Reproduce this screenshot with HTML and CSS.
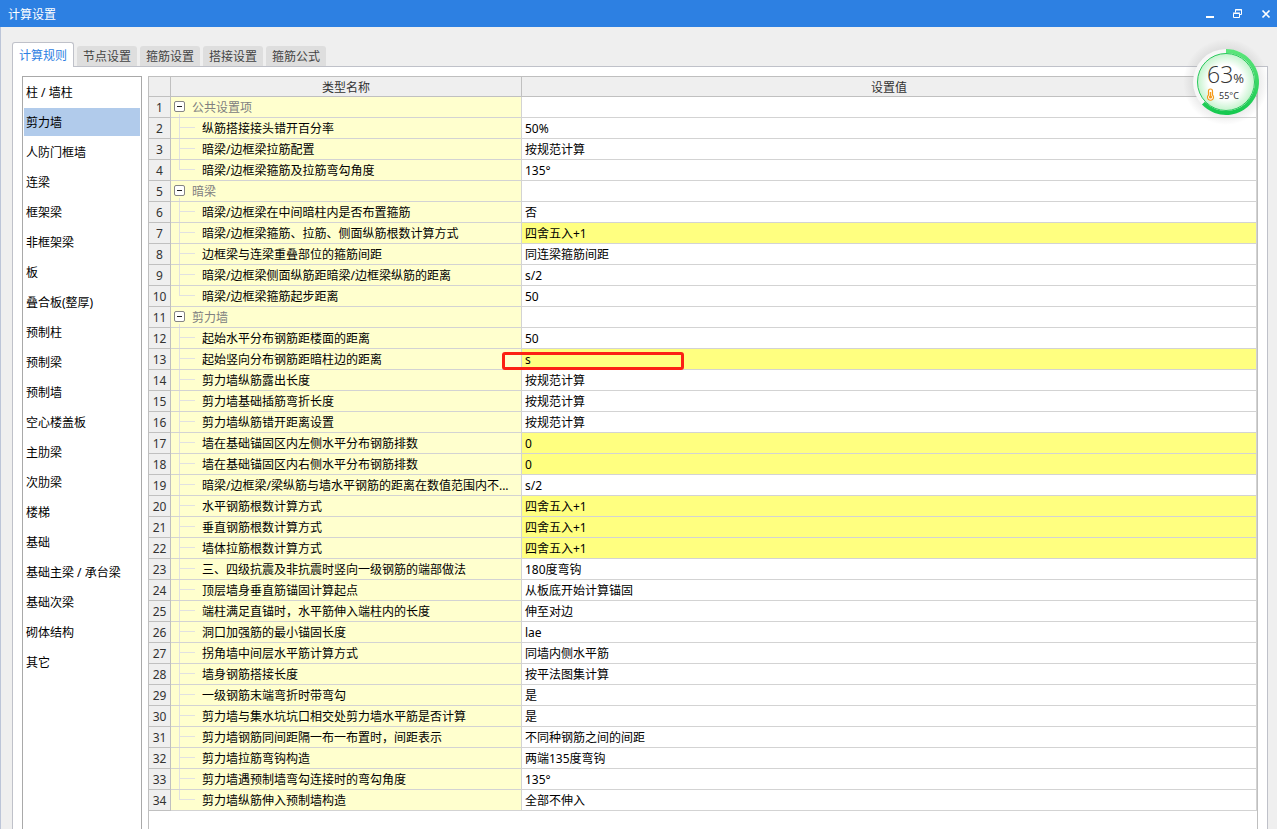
FILE: index.html
```html
<!DOCTYPE html>
<html lang="zh-CN">
<head>
<meta charset="utf-8">
<title>计算设置</title>
<link rel="stylesheet" href="styles.css">
</head>
<body>
<div class="window">
  <header class="titlebar">
    <h1 class="title">计算设置</h1>
    <div class="controls">
      <button class="control" type="button" aria-label="最小化"><svg width="10" height="10" viewBox="0 0 10 10"><path d="M1 7h8v2H1z" fill="#fff"/></svg></button>
      <button class="control" type="button" aria-label="还原"><svg width="10" height="10" viewBox="0 0 10 10" fill="none" stroke="#fff"><path d="M2.500 3.500v-3h6v5h-2M2 1h7M.500 4.500h6v4h-6zM0 4h7"/></svg></button>
      <button class="control" type="button" aria-label="关闭"><svg width="10" height="10" viewBox="0 0 10 10"><path d="M1.500 1.500l7 7M8.500 1.500l-7 7" stroke="#fff" stroke-width="1.700"/></svg></button>
    </div>
  </header>
  <div class="content">
    <nav class="tabs" role="tablist">
      <button class="tab active" type="button" role="tab" aria-selected="true">计算规则</button>
      <button class="tab" type="button" role="tab">节点设置</button>
      <button class="tab" type="button" role="tab">箍筋设置</button>
      <button class="tab" type="button" role="tab">搭接设置</button>
      <button class="tab" type="button" role="tab">箍筋公式</button>
    </nav>
    <main class="panel">
      <aside class="sidebar">
        <button class="item" type="button">柱 / 墙柱</button>
        <button class="item selected" type="button">剪力墙</button>
        <button class="item" type="button">人防门框墙</button>
        <button class="item" type="button">连梁</button>
        <button class="item" type="button">框架梁</button>
        <button class="item" type="button">非框架梁</button>
        <button class="item" type="button">板</button>
        <button class="item" type="button">叠合板(整厚)</button>
        <button class="item" type="button">预制柱</button>
        <button class="item" type="button">预制梁</button>
        <button class="item" type="button">预制墙</button>
        <button class="item" type="button">空心楼盖板</button>
        <button class="item" type="button">主肋梁</button>
        <button class="item" type="button">次肋梁</button>
        <button class="item" type="button">楼梯</button>
        <button class="item" type="button">基础</button>
        <button class="item" type="button">基础主梁 / 承台梁</button>
        <button class="item" type="button">基础次梁</button>
        <button class="item" type="button">砌体结构</button>
        <button class="item" type="button">其它</button>
      </aside>
      <section class="grid-box">
        <table class="grid">
          <colgroup><col class="col-no"><col class="col-name"><col></colgroup>
          <thead><tr><th></th><th>类型名称</th><th>设置值</th></tr></thead>
          <tbody>
            <tr class="group"><th>1</th><td><button class="toggle" type="button" aria-label="折叠"></button>公共设置项</td><td></td></tr>
            <tr><th>2</th><td>纵筋搭接接头错开百分率</td><td>50%</td></tr>
            <tr><th>3</th><td>暗梁/边框梁拉筋配置</td><td>按规范计算</td></tr>
            <tr class="last"><th>4</th><td>暗梁/边框梁箍筋及拉筋弯勾角度</td><td>135°</td></tr>
            <tr class="group"><th>5</th><td><button class="toggle" type="button" aria-label="折叠"></button>暗梁</td><td></td></tr>
            <tr><th>6</th><td>暗梁/边框梁在中间暗柱内是否布置箍筋</td><td>否</td></tr>
            <tr class="changed"><th>7</th><td>暗梁/边框梁箍筋、拉筋、侧面纵筋根数计算方式</td><td>四舍五入+1</td></tr>
            <tr><th>8</th><td>边框梁与连梁重叠部位的箍筋间距</td><td>同连梁箍筋间距</td></tr>
            <tr><th>9</th><td>暗梁/边框梁侧面纵筋距暗梁/边框梁纵筋的距离</td><td>s/2</td></tr>
            <tr class="last"><th>10</th><td>暗梁/边框梁箍筋起步距离</td><td>50</td></tr>
            <tr class="group"><th>11</th><td><button class="toggle" type="button" aria-label="折叠"></button>剪力墙</td><td></td></tr>
            <tr><th>12</th><td>起始水平分布钢筋距楼面的距离</td><td>50</td></tr>
            <tr class="changed"><th>13</th><td>起始竖向分布钢筋距暗柱边的距离</td><td class="marked">s<span class="marker"></span></td></tr>
            <tr><th>14</th><td>剪力墙纵筋露出长度</td><td>按规范计算</td></tr>
            <tr><th>15</th><td>剪力墙基础插筋弯折长度</td><td>按规范计算</td></tr>
            <tr><th>16</th><td>剪力墙纵筋错开距离设置</td><td>按规范计算</td></tr>
            <tr class="changed"><th>17</th><td>墙在基础锚固区内左侧水平分布钢筋排数</td><td>0</td></tr>
            <tr class="changed"><th>18</th><td>墙在基础锚固区内右侧水平分布钢筋排数</td><td>0</td></tr>
            <tr><th>19</th><td>暗梁/边框梁/梁纵筋与墙水平钢筋的距离在数值范围内不...</td><td>s/2</td></tr>
            <tr class="changed"><th>20</th><td>水平钢筋根数计算方式</td><td>四舍五入+1</td></tr>
            <tr class="changed"><th>21</th><td>垂直钢筋根数计算方式</td><td>四舍五入+1</td></tr>
            <tr class="changed"><th>22</th><td>墙体拉筋根数计算方式</td><td>四舍五入+1</td></tr>
            <tr><th>23</th><td>三、四级抗震及非抗震时竖向一级钢筋的端部做法</td><td>180度弯钩</td></tr>
            <tr><th>24</th><td>顶层墙身垂直筋锚固计算起点</td><td>从板底开始计算锚固</td></tr>
            <tr><th>25</th><td>端柱满足直锚时，水平筋伸入端柱内的长度</td><td>伸至对边</td></tr>
            <tr><th>26</th><td>洞口加强筋的最小锚固长度</td><td>lae</td></tr>
            <tr><th>27</th><td>拐角墙中间层水平筋计算方式</td><td>同墙内侧水平筋</td></tr>
            <tr><th>28</th><td>墙身钢筋搭接长度</td><td>按平法图集计算</td></tr>
            <tr><th>29</th><td>一级钢筋末端弯折时带弯勾</td><td>是</td></tr>
            <tr><th>30</th><td>剪力墙与集水坑坑口相交处剪力墙水平筋是否计算</td><td>是</td></tr>
            <tr><th>31</th><td>剪力墙钢筋同间距隔一布一布置时，间距表示</td><td>不同种钢筋之间的间距</td></tr>
            <tr><th>32</th><td>剪力墙拉筋弯钩构造</td><td>两端135度弯钩</td></tr>
            <tr><th>33</th><td>剪力墙遇预制墙弯勾连接时的弯勾角度</td><td>135°</td></tr>
            <tr class="last"><th>34</th><td>剪力墙纵筋伸入预制墙构造</td><td>全部不伸入</td></tr>
          </tbody>
        </table>
      </section>
    </main>
  </div>
  <div class="gauge">
    <svg class="gauge-ring" viewBox="0 0 90 90" width="90" height="90" aria-hidden="true">
      <defs>
        <radialGradient id="halo"><stop offset=".7" stop-color="#888" stop-opacity=".2"/><stop offset="1" stop-color="#888" stop-opacity="0"/></radialGradient>
        <radialGradient id="face"><stop offset=".6" stop-color="#fff"/><stop offset="1" stop-color="#c4f3cd"/></radialGradient>
        <linearGradient id="arc" x1="0" y1="0" x2="0" y2="1"><stop offset="0" stop-color="#5be57a"/><stop offset="1" stop-color="#16c950"/></linearGradient>
      </defs>
      <circle cx="45" cy="45" r="43" fill="url(#halo)"/>
      <circle cx="45" cy="45" r="33" fill="#f7f7f7"/>
      <path d="M45 14A31 31 0 1 1 22.400 66.200" fill="none" stroke="url(#arc)" stroke-width="4"/>
      <circle cx="45" cy="45" r="28.500" fill="url(#face)" stroke="#28c95b"/>
      <path d="M27.500 58v-4a2 2 0 0 1 4 0v4a3 3 0 1 1-4 0z" fill="#fff" stroke="#f59a1b" stroke-width="1.200"/>
      <path d="M29.500 55v5" stroke="#f59a1b" stroke-width="1.500"/>
      <circle cx="29.500" cy="60" r="1.600" fill="#f59a1b"/>
    </svg>
    <div class="gauge-text">
      <div class="load">63<span class="unit">%</span></div>
      <div class="temp">55°C</div>
    </div>
  </div>
</div>
</body>
</html>
```
FILE: styles.css
```css
* { box-sizing: border-box; }
body, button, table {
  font-family: "Noto Sans", "Noto Sans CJK SC", sans-serif;
  font-size: 12px;
}
body { margin: 0; color: #000; }
button { margin: 0; padding: 0; border: 0; background: none; color: inherit; }

.window {
  position: relative;
  display: flex;
  flex-direction: column;
  height: 100vh;
  overflow: hidden;
  background: #efefef;
}
.titlebar {
  display: flex;
  flex: none;
  justify-content: space-between;
  align-items: center;
  height: 27px;
  padding: 0 6px 0 8px;
  background: #2d80e2;
  color: #fff;
}
.title { margin: 0; font-size: 12px; font-weight: 400; }
.controls { display: flex; gap: 18px; }
.control { display: flex; width: 10px; height: 10px; }

.content {
  display: flex;
  flex: 1;
  flex-direction: column;
  min-height: 0;
  padding: 15px 9px 0 11px;
  border-left: 1px solid #bcc5d8;
}
.tabs { display: flex; align-items: flex-end; gap: 3px; height: 25px; }
.tab {
  width: 60px;
  height: 20px;
  margin-bottom: 1px;
  border-radius: 3px 3px 0 0;
  background: #dedede;
  color: #444;
  line-height: 22px;
}
.tab.active {
  z-index: 1;
  width: 62px;
  height: 25px;
  margin-bottom: 0;
  border: 1px solid #bfc1c9;
  border-bottom: 0;
  background: #fff;
  color: #2d80e2;
  line-height: 26px;
}
.panel {
  display: flex;
  flex: 1;
  gap: 6px;
  min-height: 0;
  margin-top: -1px;
  padding: 9px 9px 0;
  border: 1px solid #bfc1c9;
  border-bottom: 0;
  background: #fff;
}
.sidebar {
  display: flex;
  flex: none;
  flex-direction: column;
  gap: 2px;
  width: 120px;
  padding: 1px;
  border: 1px solid #a9a9a9;
  border-bottom: 0;
}
.item { flex: none; height: 28px; padding-left: 2px; text-align: left; }
.item.selected { background: #b1cbeb; }

.grid-box {
  flex: 1;
  min-width: 0;
  border: 1px solid #bfbfbf;
  border-bottom: 0;
}
.grid {
  width: 100%;
  table-layout: fixed;
  border-spacing: 0;
  line-height: 18px;
}
.col-no { width: 22px; }
.col-name { width: 351px; }
.grid th, .grid td {
  height: 21px;
  padding: 2px 0 0;
  border-right: 1px solid #d3d3d3;
  border-bottom: 1px solid #d3d3d3;
  font-weight: 400;
  white-space: nowrap;
}
.grid th { border-color: #c0c0c0; background: #efefef; color: #333; }
.grid thead th { height: 20px; line-height: 17px; }
.grid td:nth-child(2) {
  padding-left: 31px;
  overflow: hidden;
  background:
    linear-gradient(#e1e1e1, #e1e1e1) 8px 0 / 1px 100% no-repeat,
    linear-gradient(#e1e1e1, #e1e1e1) 8px 9px / 16px 1px no-repeat,
    #ffffce;
}
.grid .last td:nth-child(2) { background-size: 1px 10px, 16px 1px, auto; }
.grid .group td:nth-child(2) {
  padding-left: 3px;
  background:
    linear-gradient(#e1e1e1, #e1e1e1) 8px 17px / 1px 4px no-repeat,
    #ffffce;
  color: #808080;
}
.grid td:nth-child(3) { padding-left: 3px; }
.grid .changed td:nth-child(3) { background: #ffff80; }
.toggle {
  width: 11px;
  height: 11px;
  margin-right: 7px;
  border: 1px solid #858585;
  border-radius: 2px;
  background: linear-gradient(#222, #222) center / 5px 1px no-repeat #fff;
  vertical-align: 1px;
}
.marked { position: relative; }
.marker {
  position: absolute;
  top: 3px;
  left: -20px;
  width: 182px;
  height: 18px;
  border: 3px solid #fc2014;
  border-radius: 3px;
}

.gauge {
  position: absolute;
  top: 37px;
  right: 6px;
  width: 90px;
  height: 90px;
}
.gauge-ring { position: absolute; inset: 0; }
.gauge-text { position: relative; padding: 26px 0 0 26px; color: #333; }
.load {
  font-family: "Open Sans", "Noto Sans", sans-serif;
  font-size: 23px;
  font-weight: 300;
  line-height: 22px;
  white-space: nowrap;
}
.unit { font-size: 13px; font-weight: 400; }
.temp { padding-left: 12px; font-size: 9px; line-height: 14px; }
```
